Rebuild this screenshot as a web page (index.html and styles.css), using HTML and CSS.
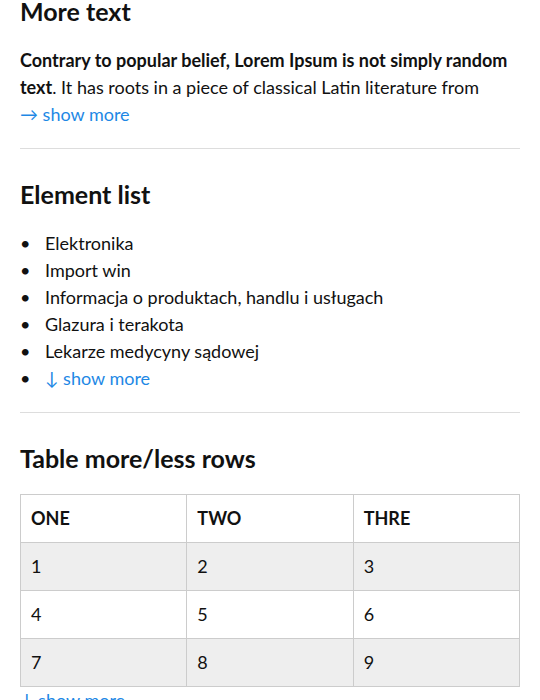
FILE: index.html
```html
<!DOCTYPE html>
<html>
<head>
  <title>show more / show less</title>
  <link rel="stylesheet" href="styles.css">
</head>
<body>
  <div class="page">
    <section class="block">
      <h2>More text</h2>
      <p><b>Contrary to popular belief, Lorem Ipsum is not simply random text</b>. It has roots in a piece of classical Latin literature from<br>
        <a href="#" class="more">&rarr; show more</a></p>
    </section>

    <section class="block">
      <h2>Element list</h2>
      <ul class="items">
        <li>Elektronika</li>
        <li>Import win</li>
        <li>Informacja o produktach, handlu i usługach</li>
        <li>Glazura i terakota</li>
        <li>Lekarze medycyny sądowej</li>
        <li><a href="#" class="more">&darr; show more</a></li>
      </ul>
    </section>

    <section class="block last">
      <h2>Table more/less rows</h2>
      <table class="grid">
        <thead>
          <tr><th>ONE</th><th>TWO</th><th>THRE</th></tr>
        </thead>
        <tbody>
          <tr><td>1</td><td>2</td><td>3</td></tr>
          <tr><td>4</td><td>5</td><td>6</td></tr>
          <tr><td>7</td><td>8</td><td>9</td></tr>
        </tbody>
      </table>
      <a href="#" class="more">&darr; show more</a>
    </section>
  </div>
</body>
</html>
```

FILE: styles.css
```css
body {
  margin: 0;
  padding: 0 20px;
  font-family: Lato, "Open Sans", sans-serif;
  font-size: 18px;
  line-height: 27px;
  color: #111;
  background: #fff;
}
.page {
  margin-top: -34px;  /* page is scrolled a little */
}
.block {
  padding: 30px 0 20px;
  border-bottom: 1px solid #ddd;
}
.block.last {
  border-bottom: none;
}
h2 {
  margin: 0 0 20px;
  font-size: 25px;
  line-height: 31px;
  font-weight: 700;
}
p {
  margin: 0;
}
a.more {
  color: #1e88e5;
  text-decoration: none;
}
.items {
  list-style: none;
  margin: 0;
  padding: 0;
}
.items li {
  display: flex;
}
.items li::before {
  content: "\2022";
  width: 25px;
  flex: none;
}
.grid {
  width: 100%;
  table-layout: fixed;
  border-collapse: collapse;
}
.grid th, .grid td {
  border: 1px solid #ccc;
  padding: 10px;
  text-align: left;
}
.grid tbody tr:nth-child(odd) {
  background: #eee;
}
```
